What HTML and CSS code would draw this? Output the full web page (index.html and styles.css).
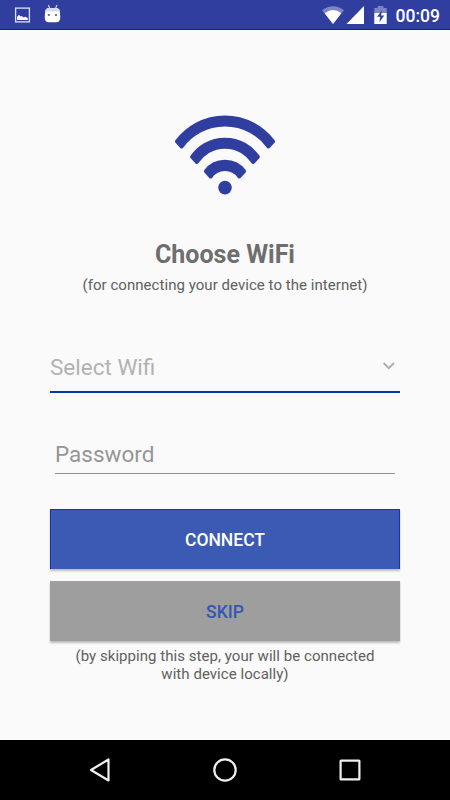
FILE: index.html
```html
<!DOCTYPE html>
<html lang="en">
<head>
<meta charset="utf-8">
<title>Choose WiFi</title>
<link rel="stylesheet" href="styles.css">
</head>
<body>
<div class="screen">
  <header class="status">
    <svg class="status-left" width="80" height="30" viewBox="0 0 80 30">
      <rect x="15.6" y="8.1" width="13.8" height="13.8" fill="none" stroke="#dfe2f3" stroke-width="1.3"/>
      <path d="M17 20v-3l2-2.2 1.5 1.7 1.5-.6 1.5 1.6 1.8-.8 2.5 1.3v2z" fill="#fff"/>
      <path d="M48.3 5l1.8 4M57 5l-1.8 4" stroke="#c9cdea" stroke-width="1.2"/>
      <path d="M45.2 11.5Q45.5 8 49 8h7q3.6 0 3.8 3.5L60.3 17q.2 5.3-4.3 5.3h-7q-4.5 0-4.3-5.3z" fill="#fff"/>
      <path d="M45.2 11.5Q45.5 8 49 8h7q3.6 0 3.8 3.5z" fill="#d8dbef"/>
      <path d="M47.8 14h2v2h-2zM55 14h2v2h-2z" fill="#6873b9"/>
    </svg>
    <div class="status-right">
      <svg width="70" height="30" viewBox="320 0 70 30">
        <path d="M322 10.3Q333 2.3 344 10.3L333 24z" fill="#7c86c4"/>
        <path d="M324.7 13.3Q333 6.7 341.3 13.3L333 24z" fill="#fff"/>
        <path d="M346.5 24L364 6v18z" fill="#fff"/>
        <path d="M374.3 14V8h3.3V6h5.8v2h3.3v6z" fill="#7c86c4"/>
        <path d="M374.3 13h12.4v11h-12.4z" fill="#fff"/>
        <path d="M382 10.3l-5 6.5h3.2l-.8 5.5 4.8-6.8h-3.1z" fill="#303f9f"/>
      </svg>
      <span class="clock">00:09</span>
    </div>
  </header>

  <main class="content">
    <svg class="wifi" width="104" height="84" viewBox="173 113 104 84">
      <g fill="#303f9f" stroke="#303f9f" stroke-width="4" stroke-linejoin="round">
        <path d="M177 141.5A60 60 0 0 1 273 141.5L268.5 146.5A54 54 0 0 0 181.5 146.5z"/>
        <path d="M192.2 157A39.7 39.7 0 0 1 257.8 157L253.2 162A33.6 33.6 0 0 0 196.8 162z"/>
        <path d="M205.9 171.2A24 24 0 0 1 244.1 171.2L239.4 176.5A17.6 17.6 0 0 0 210.6 176.5z"/>
      </g>
      <circle cx="225" cy="187.6" r="6.8" fill="#303f9f"/>
    </svg>
    <h1 class="title"><span>Choose WiFi</span></h1>
    <p class="note">(for connecting your device to the internet)</p>
    <div class="select">
      <span class="select-label">Select Wifi</span>
      <svg width="14" height="10" viewBox="0 0 14 10"><path d="M1.6 2L6.8 7.2 12 2" fill="none" stroke="#acacac" stroke-width="1.9"/></svg>
    </div>
    <div class="password"><span class="password-label">Password</span></div>
    <button class="btn connect"><span>CONNECT</span></button>
    <button class="btn skip"><span>SKIP</span></button>
    <p class="note hint">(by skipping this step, your will be connected<br>with device locally)</p>
  </main>

  <nav class="nav">
    <svg width="24" height="28" viewBox="88 756 24 28"><path d="M91 770L108.5 759.5v21z" fill="none" stroke="#f0f0f0" stroke-width="2.2" stroke-linejoin="round"/></svg>
    <svg width="26" height="28" viewBox="212 756 26 28"><circle cx="225" cy="770" r="10.7" fill="none" stroke="#f0f0f0" stroke-width="2.2"/></svg>
    <svg width="24" height="28" viewBox="338 756 24 28"><rect x="340.6" y="760.6" width="18.8" height="18.8" rx=".5" fill="none" stroke="#f0f0f0" stroke-width="2.2"/></svg>
  </nav>
</div>
</body>
</html>
```

FILE: styles.css
```css
* { box-sizing: border-box; }
body { margin: 0; font-family: Roboto, sans-serif; }
svg { display: block; flex: none; }
.screen { width: 450px; height: 800px; display: flex; flex-direction: column; background: #fafafa; }
.status { height: 30px; flex: none; display: flex; justify-content: space-between; background: #303f9f; border-bottom: 1px solid #11208a; }
.status-right { display: flex; width: 130px; }
.clock { padding-left: 5.5px; font-size: 17.5px; font-weight: 500; line-height: 32px; color: #fff; }
.content { flex: 1; padding: 83px 50px 0; display: flex; flex-direction: column; align-items: stretch; }
.wifi { align-self: center; }
.title { margin: 43px 0 0; height: 30px; line-height: 30px; font-size: 25px; font-weight: 700; color: #6e6e6e; text-align: center; }
.note { margin: 6px -20px 0; font-size: 15px; letter-spacing: .045px; line-height: 18px; color: #606060; text-align: center; white-space: nowrap; }
.select { height: 48px; margin-top: 51px; padding: 0 4px 0 0; display: flex; justify-content: space-between; border-bottom: 2px solid #0439a8; }
.select-label { font-size: 22.5px; line-height: 44px; color: #b2b2b2; }
.select svg { margin-top: 16px; }
.password { height: 38px; margin: 43px 5px 0; border-bottom: 1px solid #929292; }
.password-label { font-size: 22.5px; line-height: 37px; color: #959595; }
.btn { display: block; width: 350px; height: 60px; flex: none; padding: 0; border: 0; font: 500 17.5px/60px Roboto, sans-serif; box-shadow: 0 2px 2px rgba(0,0,0,.25); }
.btn span { display: block; padding-top: 1px; line-height: 60px; }
.connect { margin-top: 35px; color: #fff; background: #3b5ab3; border: 1px solid #1238a7; border-bottom: 0; }
.connect span { padding-top: 1px; line-height: 59px; }
.skip { margin-top: 12px; color: #3556b4; background: #9e9e9e; }
.hint { margin-top: 6px; }
.nav { height: 60px; flex: none; padding: 0 88px; display: flex; align-items: center; justify-content: space-between; background: #000; }
```
